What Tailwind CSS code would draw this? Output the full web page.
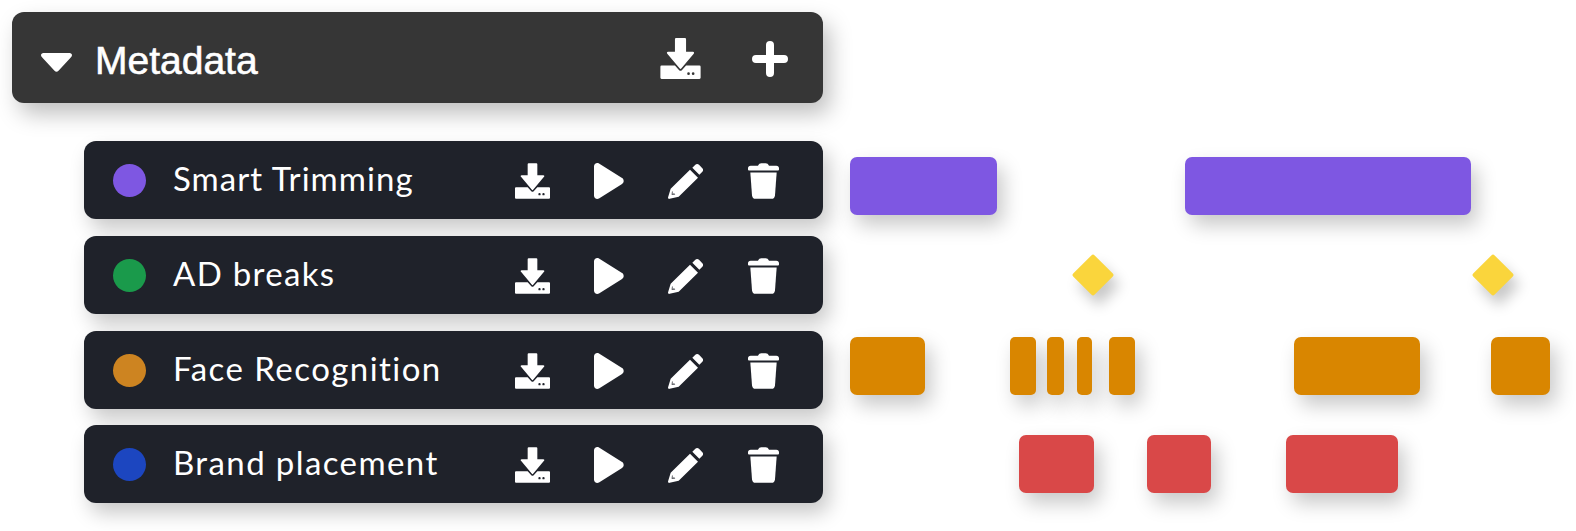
<!DOCTYPE html>
<html lang="en">
<head>
    <meta charset="UTF-8">
    <meta name="viewport" content="width=device-width, initial-scale=1.0">
    <title>Metadata</title>
    <script src="https://cdn.jsdelivr.net/npm/@tailwindcss/browser@4"></script>
</head>
<body class="bg-white h-[531px] overflow-hidden pt-[12px] pl-[12px]">
    <svg class="hidden">
        <symbol id="i-download" viewBox="0 0 105 107">
            <path fill-rule="evenodd" d="M41 0H64a3 3 0 0 1 3 3V36H85c3 0 4 3 2 5L55 79a3 3 0 0 1-5 0L18 41c-2-2-1-5 2-5H38V3a3 3 0 0 1 3-3ZM3 72H38L49 84a5 5 0 0 0 7 0L67 72H102a3 3 0 0 1 3 3V104a3 3 0 0 1-3 3H3a3 3 0 0 1-3-3V75a3 3 0 0 1 3-3ZM70 93a3.500 3.500 0 1 0 7 0a3.500 3.500 0 1 0-7 0ZM82 93a3.500 3.500 0 1 0 7 0a3.500 3.500 0 1 0-7 0Z"/>
        </symbol>
        <symbol id="i-play" viewBox="0 0 90 107">
            <path d="M0 10C0 2 8-3 15 1L83 44c8 4 8 15 0 19L15 106c-7 4-15-1-15-9Z"/>
        </symbol>
        <symbol id="i-pencil" viewBox="0 0 108 107">
            <path fill-rule="evenodd" d="M66 20 90 44 32 101 5 107c-3 1-5-1-5-4L8 77ZM12 84l-1 11 11-1-3-3-6 1 1-6Z"/>
            <path d="M73 14 82 5c3-3 8-3 11 0l10 10c3 3 3 8 0 11l-9 9Z"/>
        </symbol>
        <symbol id="i-trash" viewBox="0 0 93 107">
            <path d="M30 8C32 2 36 0 40 0H53c4 0 8 2 10 8H85c5 0 8 3 8 7v4c0 2-1 3-3 3H3c-2 0-3-1-3-3V15c0-4 3-7 8-7H30Z"/>
            <path d="M7 28H86L81 96c-1 7-4 11-11 11H23c-7 0-10-4-11-11Z"/>
        </symbol>
    </svg>

    <!-- Group header -->
    <div class="w-[811px] h-[91px] flex items-center bg-[#363636] rounded-[12px] shadow-[7px_11px_22px_rgba(0,0,0,0.25)] text-white">
        <svg class="ml-[29px] mt-[10px] w-[31px] h-[19px] fill-white" viewBox="0 0 31 19"><path d="M2.500 0H28.500C31 0 31.800 2.500 30 4.200L17.500 17.800C16.300 19 14.700 19 13.500 17.800L1 4.200C-0.800 2.500 0 0 2.500 0Z"/></svg>
        <span class="ml-[23px] mt-[6px] font-['Liberation_Sans',sans-serif] text-[39px] leading-none [-webkit-text-stroke:0.6px_white]">Metadata</span>
        <div class="ml-auto mt-[2px] pr-[35px] flex items-center gap-[51px] fill-white">
            <svg class="w-[41px] h-[41px]"><use href="#i-download"/></svg>
            <svg class="w-[36px] h-[36px]" viewBox="0 0 36 36"><path d="M14 4a4 4 0 0 1 8 0V14H32a4 4 0 0 1 0 8H22V32a4 4 0 0 1-8 0V22H4a4 4 0 0 1 0-8H14Z"/></svg>
        </div>
    </div>

    <div class="mt-[38px] flex flex-col">
        <!-- Smart Trimming -->
        <div class="flex h-[78px]">
            <div class="ml-[72px] w-[739px] shrink-0 flex items-center pl-[29px] bg-[#1f222a] rounded-[12px] shadow-[6px_10px_20px_rgba(0,0,0,0.22)] text-white">
                <span class="w-[33px] h-[33px] rounded-full bg-[#7e57e2]"></span>
                <span class="ml-[27px] mb-[3px] font-['Lato',sans-serif] text-[33px] tracking-[1.05px] leading-none">Smart Trimming</span>
                <div class="ml-auto mt-[2px] pr-[44px] flex items-center gap-[44px] fill-white">
                    <svg class="w-[35px] h-[36px]"><use href="#i-download"/></svg>
                    <svg class="w-[30px] h-[36px]"><use href="#i-play"/></svg>
                    <svg class="w-[36px] h-[36px]"><use href="#i-pencil"/></svg>
                    <svg class="w-[31px] h-[36px]"><use href="#i-trash"/></svg>
                </div>
            </div>
            <div class="ml-[27px] mt-[16px] flex items-start">
                <div class="w-[147px] h-[58px] rounded-[7px] bg-[#7e57e2] shadow-[6px_10px_20px_rgba(0,0,0,0.22)]"></div>
                <div class="ml-[188px] w-[286px] h-[58px] rounded-[7px] bg-[#7e57e2] shadow-[6px_10px_20px_rgba(0,0,0,0.22)]"></div>
            </div>
        </div>

        <!-- AD breaks -->
        <div class="flex h-[78px] mt-[17px]">
            <div class="ml-[72px] w-[739px] shrink-0 flex items-center pl-[29px] bg-[#1f222a] rounded-[12px] shadow-[6px_10px_20px_rgba(0,0,0,0.22)] text-white">
                <span class="w-[33px] h-[33px] rounded-full bg-[#1a9a4b]"></span>
                <span class="ml-[27px] mb-[3px] font-['Lato',sans-serif] text-[33px] tracking-[1.3px] leading-none">AD breaks</span>
                <div class="ml-auto mt-[2px] pr-[44px] flex items-center gap-[44px] fill-white">
                    <svg class="w-[35px] h-[36px]"><use href="#i-download"/></svg>
                    <svg class="w-[30px] h-[36px]"><use href="#i-play"/></svg>
                    <svg class="w-[36px] h-[36px]"><use href="#i-pencil"/></svg>
                    <svg class="w-[31px] h-[36px]"><use href="#i-trash"/></svg>
                </div>
            </div>
            <div class="ml-[27px] flex items-center">
                <div class="ml-[228px] w-[30px] h-[30px] rotate-45 rounded-[2px] bg-[#fad53c] shadow-[11px_3px_14px_rgba(0,0,0,0.22)]"></div>
                <div class="ml-[370px] w-[30px] h-[30px] rotate-45 rounded-[2px] bg-[#fad53c] shadow-[11px_3px_14px_rgba(0,0,0,0.22)]"></div>
            </div>
        </div>

        <!-- Face Recognition -->
        <div class="flex h-[78px] mt-[17px]">
            <div class="ml-[72px] w-[739px] shrink-0 flex items-center pl-[29px] bg-[#1f222a] rounded-[12px] shadow-[6px_10px_20px_rgba(0,0,0,0.22)] text-white">
                <span class="w-[33px] h-[33px] rounded-full bg-[#cd8421]"></span>
                <span class="ml-[27px] mb-[3px] font-['Lato',sans-serif] text-[33px] tracking-[1.45px] leading-none">Face Recognition</span>
                <div class="ml-auto mt-[2px] pr-[44px] flex items-center gap-[44px] fill-white">
                    <svg class="w-[35px] h-[36px]"><use href="#i-download"/></svg>
                    <svg class="w-[30px] h-[36px]"><use href="#i-play"/></svg>
                    <svg class="w-[36px] h-[36px]"><use href="#i-pencil"/></svg>
                    <svg class="w-[31px] h-[36px]"><use href="#i-trash"/></svg>
                </div>
            </div>
            <div class="ml-[27px] mt-[6px] flex items-start">
                <div class="w-[75px] h-[58px] rounded-[7px] bg-[#d98600] shadow-[6px_10px_20px_rgba(0,0,0,0.22)]"></div>
                <div class="ml-[85px] w-[26px] h-[58px] rounded-[5px] bg-[#d98600] shadow-[6px_10px_20px_rgba(0,0,0,0.22)]"></div>
                <div class="ml-[11px] w-[17px] h-[58px] rounded-[5px] bg-[#d98600] shadow-[6px_10px_20px_rgba(0,0,0,0.22)]"></div>
                <div class="ml-[13px] w-[15px] h-[58px] rounded-[5px] bg-[#d98600] shadow-[6px_10px_20px_rgba(0,0,0,0.22)]"></div>
                <div class="ml-[17px] w-[26px] h-[58px] rounded-[5px] bg-[#d98600] shadow-[6px_10px_20px_rgba(0,0,0,0.22)]"></div>
                <div class="ml-[159px] w-[126px] h-[58px] rounded-[7px] bg-[#d98600] shadow-[6px_10px_20px_rgba(0,0,0,0.22)]"></div>
                <div class="ml-[71px] w-[59px] h-[58px] rounded-[7px] bg-[#d98600] shadow-[6px_10px_20px_rgba(0,0,0,0.22)]"></div>
            </div>
        </div>

        <!-- Brand placement -->
        <div class="flex h-[78px] mt-[16px]">
            <div class="ml-[72px] w-[739px] shrink-0 flex items-center pl-[29px] bg-[#1f222a] rounded-[12px] shadow-[6px_10px_20px_rgba(0,0,0,0.22)] text-white">
                <span class="w-[33px] h-[33px] rounded-full bg-[#1c46c0]"></span>
                <span class="ml-[27px] mb-[3px] font-['Lato',sans-serif] text-[33px] tracking-[1.4px] leading-none">Brand placement</span>
                <div class="ml-auto mt-[2px] pr-[44px] flex items-center gap-[44px] fill-white">
                    <svg class="w-[35px] h-[36px]"><use href="#i-download"/></svg>
                    <svg class="w-[30px] h-[36px]"><use href="#i-play"/></svg>
                    <svg class="w-[36px] h-[36px]"><use href="#i-pencil"/></svg>
                    <svg class="w-[31px] h-[36px]"><use href="#i-trash"/></svg>
                </div>
            </div>
            <div class="ml-[27px] mt-[10px] flex items-start">
                <div class="ml-[169px] w-[75px] h-[58px] rounded-[7px] bg-[#d94848] shadow-[6px_10px_20px_rgba(0,0,0,0.22)]"></div>
                <div class="ml-[53px] w-[64px] h-[58px] rounded-[7px] bg-[#d94848] shadow-[6px_10px_20px_rgba(0,0,0,0.22)]"></div>
                <div class="ml-[75px] w-[112px] h-[58px] rounded-[7px] bg-[#d94848] shadow-[6px_10px_20px_rgba(0,0,0,0.22)]"></div>
            </div>
        </div>
    </div>
</body>
</html>
